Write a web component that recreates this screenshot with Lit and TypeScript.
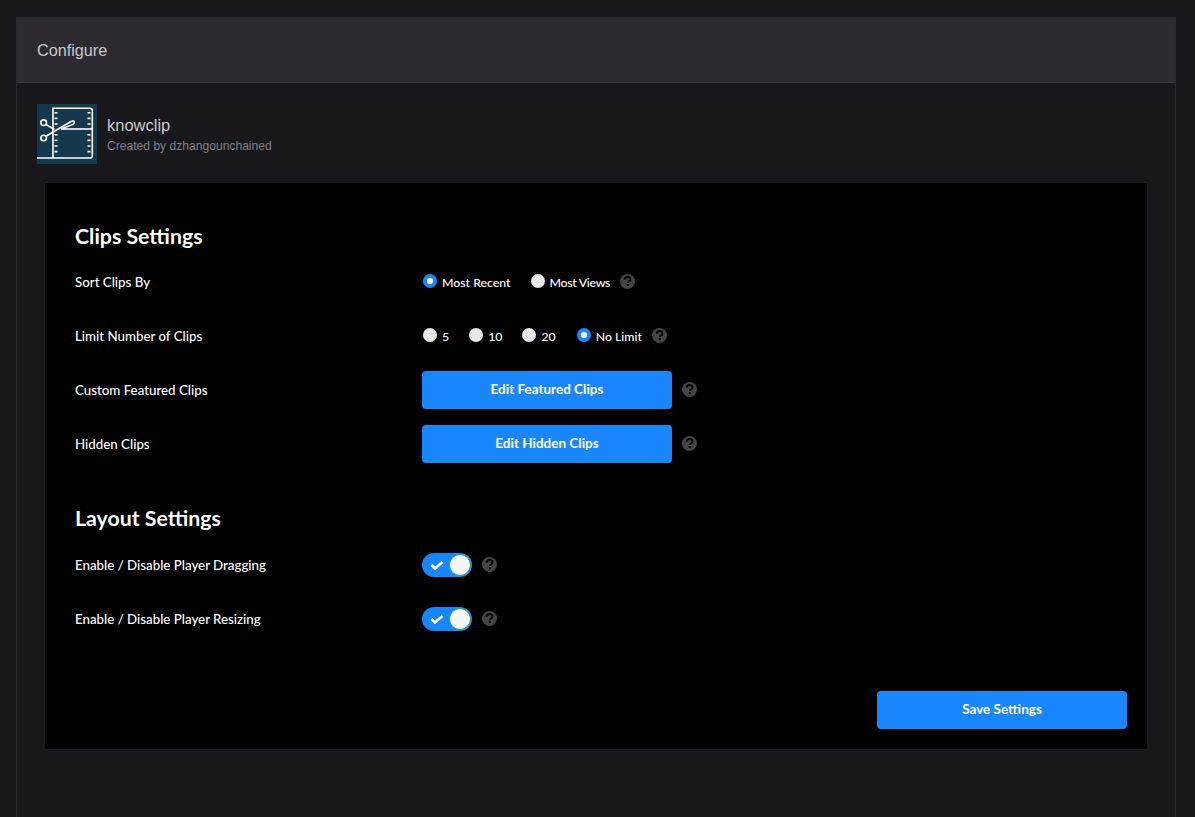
import { LitElement, html, css } from "lit";
import { customElement } from "lit/decorators.js";

const help = html`<svg class="help" viewBox="0 0 15 15" width="15" height="15"><circle cx="7.500" cy="7.500" r="7.500" fill="#454545"/><path d="M4.700 5.800c.1-1.700 1.300-2.700 2.900-2.700 1.600 0 2.800 1 2.800 2.300 0 1-.6 1.600-1.400 2.100-.8.500-1 .8-1 1.500" fill="none" stroke="#000" stroke-width="2"/><rect x="6.800" y="10" width="2.100" height="2.100" fill="#000"/></svg>`;

const logo = html`<svg class="logo" viewBox="0 0 60 60" width="60" height="60">
  <rect width="60" height="60" fill="#16384c"/>
  <g fill="none" stroke="#fff" stroke-width="1.600">
    <path d="M0 54H53q2.300 0 2.300-2.300V6.500q0-2.300-2.300-2.300H16V54"/>
    <path d="M24 25H55.300"/>
    <circle cx="6.700" cy="18.700" r="2.800"/>
    <circle cx="6.700" cy="34" r="2.800"/>
    <path d="M9 20.500L17.500 25.500M9 32.300L34 17.500q2.500-1.200 3.200.2t-1.200 2.700L24 25"/>
  </g>
  <g stroke="#fff" stroke-width="3" stroke-dasharray="1.600 4">
    <path d="M19 8V23M19 30V52"/>
    <path d="M52 8V23M52 30V52"/>
  </g>
</svg>`;

@customElement("app-root")
export class AppRoot extends LitElement {
  static styles = css`
    :host { display: block; height: 817px; overflow: hidden; background: #18171c; box-sizing: border-box; padding: 17px 19px 0 16px; font-family: Lato, "Open Sans", sans-serif; }
    .panel { height: 800px; box-sizing: border-box; border: 1px solid #2a292e; border-bottom: 0; display: flex; flex-direction: column; }
    .head { height: 65px; box-sizing: border-box; flex: none; background: #2d2b31; border-bottom: 1px solid #3a393e; padding: 0 20px; display: flex; align-items: center; font: 16.200px "Liberation Sans", Arial, sans-serif; color: #c9c8cc; }
    .ext { display: flex; align-items: center; gap: 10px; margin: 21px 0 0 20px; height: 60px; }
    .logo { display: block; flex: none; }
    .meta { padding-top: 1px; }
    .name { font: 16.500px/20px "Liberation Sans", Arial, sans-serif; color: #c9c8cc; }
    .by { font: 12.100px/16px "Liberation Sans", Arial, sans-serif; color: #82808a; margin-top: 3px; }
    .cfg { margin: 19px 28px 0 28px; height: 566px; box-sizing: border-box; background: #000; color: #fff; padding: 39px 20px 20px 30px; display: flex; flex-direction: column; }
    h2 { margin: 0; font-size: 21.300px; line-height: 28px; font-weight: 700; color: #fff; }
    .rows { display: flex; flex-direction: column; margin-top: 5px; }
    .rows.second { margin-top: 6px; }
    .layout { margin-top: 33px; }
    .row { height: 54px; display: flex; align-items: center; font-size: 13.300px; font-weight: 500; }
    .label { width: 347px; flex: none; padding-bottom: 1px; }
    .ctl { display: flex; align-items: center; }
    .opt { display: flex; align-items: center; gap: 5px; margin-right: 19px; }
    .opt.wide { margin-right: 20px; }
    .opt span { font-size: 12.300px; }
    .opt span.narrow { letter-spacing: -.3px; }
    .radio { width: 14px; height: 14px; border-radius: 50%; background: #e8e8e8; margin: 0 0 2px 1px; }
    .radio.on { box-sizing: border-box; background: #fff; border: 4px solid #1a86fe; }
    .btn { width: 250px; height: 38px; border: 0; border-radius: 4px; background: #1a86fe; color: #fff; font: 700 13.500px Lato, sans-serif; display: flex; align-items: center; justify-content: center; padding-bottom: 2px; box-sizing: border-box; }
    .help { display: block; flex: none; margin-bottom: 1px; }
    .after { margin-left: 10px; }
    .opt + .help { margin-left: -9px; }
    .switch { width: 50px; height: 24px; border-radius: 12px; background: #1a86fe; position: relative; margin-right: 10px; }
    .switch svg { position: absolute; left: 8px; top: 7px; }
    .knob { position: absolute; right: 1px; top: 1px; width: 22px; height: 22px; box-sizing: border-box; border-radius: 50%; background: #f7f7f7; border: 1px solid #2eac5a; }
    .foot { display: flex; justify-content: flex-end; margin-top: auto; }
  `;

  radio(label: string, on = false, cls = "", textCls = "") {
    return html`<div class="opt ${cls}"><div class="radio ${on ? "on" : ""}"></div><span class=${textCls}>${label}</span></div>`;
  }

  toggle(label: string) {
    return html`<div class="row"><div class="label">${label}</div><div class="ctl">
      <div class="switch"><svg width="14" height="10" viewBox="0 0 14 10"><path d="M1.500 5l3.500 3.500L12.500 2" fill="none" stroke="#fff" stroke-width="2.600"/></svg><div class="knob"></div></div>${help}
    </div></div>`;
  }

  render() {
    return html`<div class="panel">
      <div class="head">Configure</div>
      <div class="ext">${logo}<div class="meta"><div class="name">knowclip</div><div class="by">Created by dzhangounchained</div></div></div>
      <div class="cfg">
        <h2>Clips Settings</h2>
        <div class="rows">
          <div class="row"><div class="label">Sort Clips By</div><div class="ctl">${this.radio("Most Recent", true)}${this.radio("Most Views", false, "", "narrow")}${help}</div></div>
          <div class="row"><div class="label">Limit Number of Clips</div><div class="ctl">${this.radio("5")}${this.radio("10")}${this.radio("20", false, "wide")}${this.radio("No Limit", true)}${help}</div></div>
          <div class="row"><div class="label">Custom Featured Clips</div><div class="ctl"><div class="btn">Edit Featured Clips</div><div class="after">${help}</div></div></div>
          <div class="row"><div class="label">Hidden Clips</div><div class="ctl"><div class="btn">Edit Hidden Clips</div><div class="after">${help}</div></div></div>
        </div>
        <h2 class="layout">Layout Settings</h2>
        <div class="rows second">
          ${this.toggle("Enable / Disable Player Dragging")}
          ${this.toggle("Enable / Disable Player Resizing")}
        </div>
        <div class="foot"><div class="btn">Save Settings</div></div>
      </div>
    </div>`;
  }
}
